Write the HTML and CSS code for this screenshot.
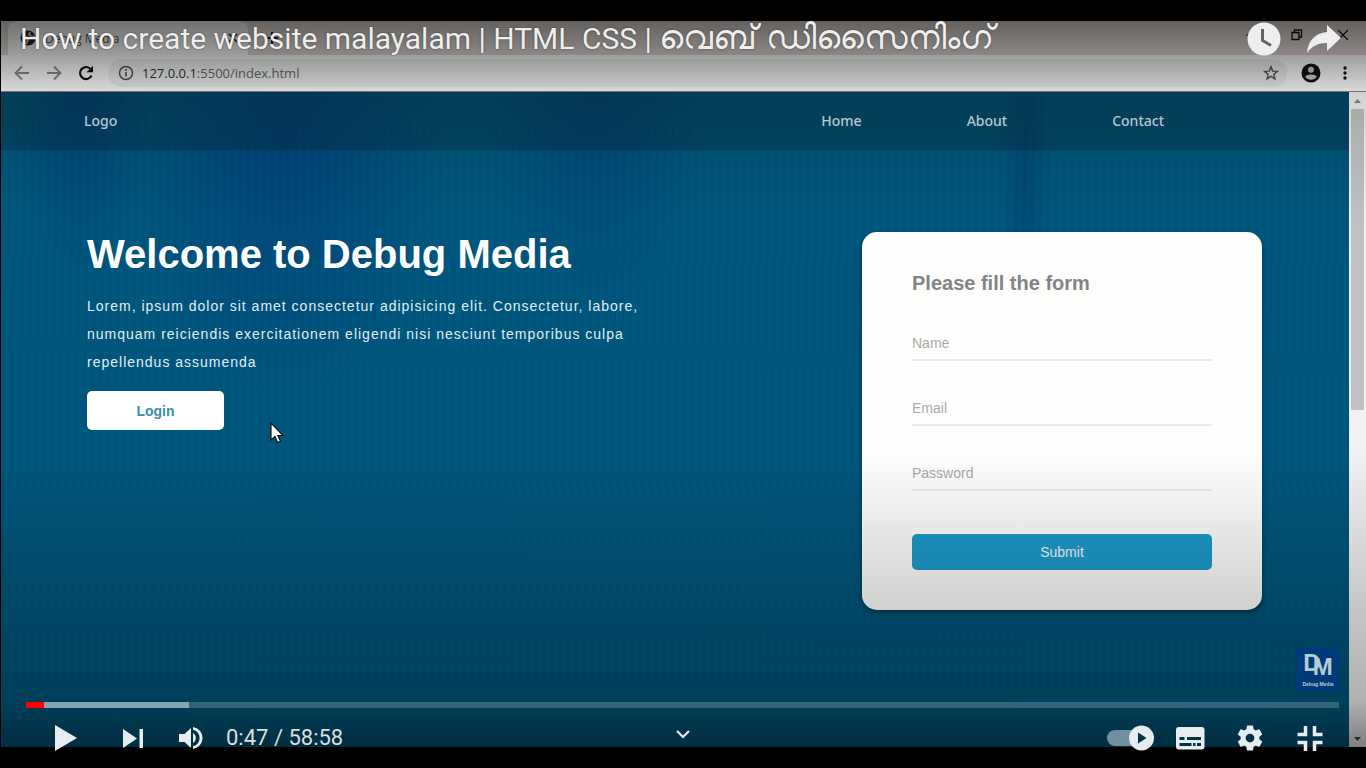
FILE: index.html
```html
<!DOCTYPE html>
<html lang="en">
<head>
<meta charset="utf-8">
<title>How to create website malayalam</title>
<link rel="stylesheet" href="styles.css">
</head>
<body>
<div class="player">
  <div class="browser">
    <div class="tabstrip">
      <div class="tab">
        <svg class="favicon" viewBox="0 0 16 16"><circle cx="8" cy="8" r="7.500" fill="#222"/><path d="M2 6l5 1 1 3-2 4M10 2l-1 3 4 2 2-1" fill="none" stroke="#bbb" stroke-width="2"/></svg>
        <span class="tab-name">Debug Media</span>
        <button class="tab-close" aria-label="Close tab"><svg width="10" height="10" viewBox="0 0 10 10"><path d="M1 1l8 8M9 1l-8 8" stroke="#222" stroke-width="1.500"/></svg></button>
      </div>
      <button class="new-tab" aria-label="New tab"><svg width="12" height="12" viewBox="0 0 12 12"><path d="M6 0v12M0 6h12" stroke="#222" stroke-width="2"/></svg></button>
      <div class="window-buttons">
        <button aria-label="Minimize"><svg width="12" height="12" viewBox="0 0 12 12"><path d="M1 6h10" stroke="#222"/></svg></button>
        <button aria-label="Restore"><svg width="12" height="12" viewBox="0 0 12 12"><path d="M1 3.500h7v7h-7zM3.500 3.500v-2.500h7v7h-2.500" fill="none" stroke="#111" stroke-width="1.300"/></svg></button>
        <button aria-label="Close"><svg width="12" height="12" viewBox="0 0 12 12"><path d="M1 1l10 10M11 1L1 11" stroke="#111" stroke-width="1.200"/></svg></button>
      </div>
    </div>
    <div class="toolbar">
      <button class="tool" aria-label="Back"><svg width="16" height="16" viewBox="0 0 16 16"><path d="M15 8H2M8 1.500L1.500 8 8 14.500" fill="none" stroke="#8a8a8a" stroke-width="1.800"/></svg></button>
      <button class="tool" aria-label="Forward"><svg width="16" height="16" viewBox="0 0 16 16"><path d="M1 8h13M8 1.500L14.500 8 8 14.500" fill="none" stroke="#8a8a8a" stroke-width="1.800"/></svg></button>
      <button class="tool" aria-label="Reload"><svg width="16" height="16" viewBox="0 0 16 16"><path d="M13.500 10.500A6 6 0 1 1 12 3.500L14 5.500" fill="none" stroke="#111" stroke-width="2.200"/><path d="M15 .8v6.400H8.600z" fill="#111"/></svg></button>
      <div class="address">
        <svg width="16" height="16" viewBox="0 0 16 16"><circle cx="8" cy="8" r="6.500" fill="none" stroke="#555" stroke-width="1.500"/><path d="M8 7v4.500M8 4v1.800" stroke="#555" stroke-width="1.700"/></svg>
        <span class="url"><b>127.0.0.1</b>:5500/index.html</span>
        <button class="star" aria-label="Bookmark"><svg width="16" height="16" viewBox="0 0 16 16"><path d="M8 1.800l1.700 4.300 4.700.3-3.600 3 1.200 4.500L8 11.400 4 13.900l1.200-4.500-3.600-3 4.700-.3z" fill="none" stroke="#555" stroke-width="1.400"/></svg></button>
      </div>
      <button class="tool" aria-label="Profile"><svg width="20" height="20" viewBox="0 0 20 20"><circle cx="10" cy="10" r="9.500" fill="#111"/><circle cx="10" cy="6.700" r="3" fill="#ccc"/><path d="M4.200 13.700c1.300-3 10.300-3 11.600 0-2.500 4-9.100 4-11.600 0z" fill="#ccc"/></svg></button>
      <button class="tool" aria-label="Menu"><svg width="16" height="16" viewBox="0 0 16 16"><g fill="#111"><circle cx="8" cy="3" r="1.700"/><circle cx="8" cy="8" r="1.700"/><circle cx="8" cy="13" r="1.700"/></g></svg></button>
    </div>
    <div class="viewport">
      <div class="page">
        <nav class="nav">
          <a class="brand" href="#">Logo</a>
          <a href="#">Home</a>
          <a href="#">About</a>
          <a href="#">Contact</a>
        </nav>
        <main class="hero">
          <section class="intro">
            <h1>Welcome to Debug Media</h1>
            <p>Lorem, ipsum dolor sit amet consectetur adipisicing elit. Consectetur, labore, numquam reiciendis exercitationem eligendi nisi nesciunt temporibus culpa repellendus assumenda</p>
            <button class="login">Login</button>
          </section>
          <form class="card">
            <h2>Please fill the form</h2>
            <input type="text" placeholder="Name" aria-label="Name">
            <input type="email" placeholder="Email" aria-label="Email">
            <input type="password" placeholder="Password" aria-label="Password">
            <button type="button" class="submit">Submit</button>
          </form>
        </main>
      </div>
      <div class="scrollbar">
        <svg width="17" height="17" viewBox="0 0 17 17"><path d="M5 11h7L8.500 7z" fill="#888"/></svg>
        <div class="thumb"></div>
        <svg class="down" width="17" height="17" viewBox="0 0 17 17"><path d="M5 7h7l-3.500 4z" fill="#444"/></svg>
      </div>
    </div>
    <div class="shade"></div>
  </div>

  <svg class="cursor" width="14" height="22" viewBox="0 0 14 22"><path d="M1 1v17l4-3.500 2.500 6 3-1.300-2.600-5.700H13z" fill="#fff" stroke="#111" stroke-width="1.200"/></svg>
  <div class="watermark"><span class="letters">D<span class="letter-m">M</span></span><span class="mark-name">Debug Media</span></div>

  <div class="overlay">
    <header class="top">
      <div class="title">How to create website malayalam | HTML CSS | <span class="ml" lang="ml">വെബ് ഡിസൈനിംഗ്</span></div>
      <button aria-label="Watch later"><svg width="36" height="36" viewBox="0 0 36 36"><circle cx="18" cy="18" r="16.500" fill="#eee"/><path d="M16.500 8v11.500l8.500 5" fill="none" stroke="#666360" stroke-width="3"/></svg></button>
      <button aria-label="Share"><svg width="36" height="36" viewBox="0 0 36 36"><path d="M21 4l14 13-14 13v-8C12 22 6 25 1 32 2 20 9 12 21 11z" fill="#eee"/></svg></button>
    </header>
    <footer class="bottom">
      <div class="seek"><div class="buffered"></div><div class="played"></div></div>
      <div class="controls">
        <div class="group left">
          <button class="wide" aria-label="Play"><svg width="36" height="36" viewBox="0 0 36 36"><path d="M7 5v26l22-13z" fill="#e6ecef"/></svg></button>
          <button class="wide" aria-label="Next"><svg width="36" height="36" viewBox="0 0 36 36"><path d="M8 9v19l14-9.500zM24.500 9h3.500v19h-3.500z" fill="#e6ecef"/></svg></button>
          <button class="slim" aria-label="Mute"><svg width="36" height="36" viewBox="0 0 36 36"><path d="M6 14v8h5.500l6.500 6V8l-6.500 6zM20 13v10c3.800-2 3.800-8 0-10zM20 7v2.700c8.800 2 8.800 14.600 0 16.600V29c12.800-2.500 12.800-19.500 0-22z" fill="#e6ecef"/></svg></button>
          <span class="time">0:47 / 58:58</span>
        </div>
        <button class="more" aria-label="More videos"><svg width="16" height="12" viewBox="0 0 16 12"><path d="M2 2l6 6 6-6" fill="none" stroke="#e6ecef" stroke-width="2.200"/></svg></button>
        <div class="group right">
          <button aria-label="Autoplay"><svg width="48" height="36" viewBox="0 0 48 36"><rect x="1" y="10" width="40" height="16" rx="8" fill="#70909d"/><circle cx="35.500" cy="18" r="12.500" fill="#e6ecef"/><path d="M32 12.500v11l8.500-5.500z" fill="#003345"/></svg></button>
          <button aria-label="Subtitles"><svg width="36" height="36" viewBox="0 0 36 36"><rect x="4" y="7" width="28.500" height="22.500" rx="3" fill="#e6ecef"/><path d="M7.500 17h5v3h-5zM15 17h14v3h-14zM7.500 23h12v3h-12zM21 23h2.500v3h-2.500zM25 23h4v3h-4z" fill="#003345"/></svg></button>
          <button aria-label="Settings"><svg width="30" height="30" viewBox="0 0 24 24"><path fill="#e6ecef" fill-rule="evenodd" d="M19.430 12.980a7.800 7.800 0 0 0 0-1.960l2.110-1.650a.5.500 0 0 0 .12-.64l-2-3.460a.5.500 0 0 0-.61-.22l-2.490 1a7.300 7.300 0 0 0-1.690-.98l-.38-2.650A.5.500 0 0 0 14 2h-4a.5.500 0 0 0-.49.420l-.38 2.650c-.61.250-1.170.590-1.690.980l-2.490-1a.5.500 0 0 0-.61.220l-2 3.460a.5.500 0 0 0 .12.640l2.110 1.650a7.800 7.800 0 0 0 0 1.960l-2.110 1.650a.5.500 0 0 0-.12.640l2 3.460c.12.220.39.300.61.220l2.490-1c.52.400 1.080.730 1.690.980l.38 2.650c.03.240.24.420.49.420h4c.25 0 .46-.18.490-.42l.38-2.650c.61-.25 1.170-.59 1.690-.98l2.490 1c.23.090.49 0 .61-.22l2-3.460a.5.500 0 0 0-.12-.64zM12 15.500a3.500 3.500 0 1 1 0-7 3.500 3.500 0 0 1 0 7z"/></svg></button>
          <button aria-label="Exit full screen"><svg width="36" height="36" viewBox="0 0 36 36"><path d="M13.500 6v8.500H5.500M22.500 6v8.500h8M13.500 31v-8.500H5.500M22.500 31v-8.500h8" fill="none" stroke="#e6ecef" stroke-width="3.500"/></svg></button>
        </div>
      </div>
    </footer>
  </div>
</div>
</body>
</html>
```
FILE: styles.css
```css
* { box-sizing: border-box; }
body { margin: 0; background: #000; font-family: "Liberation Sans", Arial, sans-serif; }
h1, h2, p { margin: 0; }
button { border: 0; padding: 0; background: none; color: inherit; font: inherit; display: flex; align-items: center; justify-content: center; }
a { color: inherit; text-decoration: none; }
svg { display: block; flex: none; }

.player { position: relative; min-height: 100vh; display: flex; flex-direction: column; padding: 21px 0 21px 1px; background: #000; }
.browser { position: relative; flex: 1; display: flex; flex-direction: column; }
.shade { position: absolute; inset: 0; pointer-events: none; background: linear-gradient(rgba(0,0,0,.55), rgba(0,0,0,.37) 34px, rgba(0,0,0,.13) 71px, rgba(0,0,0,0) 200px, rgba(0,0,0,0) 430px, rgba(0,0,0,.18) 588px, rgba(0,0,0,.27) 680px, rgba(0,0,0,.48)); }

.tabstrip { height: 34px; display: flex; align-items: center; background: #ded6d1; }
.tab { width: 240px; height: 34px; margin-left: 7px; padding: 0 10px 0 12px; display: flex; align-items: center; gap: 9px; border-radius: 8px 8px 0 0; background: #f6f6f5; }
.favicon { width: 16px; height: 16px; }
.tab-name { flex: 1; font: 12px "Open Sans", sans-serif; color: #555; }
.new-tab { margin-left: 18px; }
.window-buttons { margin-left: auto; display: flex; gap: 34px; padding: 0 17px 6px 0; }

.toolbar { height: 37px; display: flex; align-items: center; padding: 0 13px; gap: 16px; background: #fafafa; border-bottom: 1px solid #888; }
.address { flex: 1; height: 28px; display: flex; align-items: center; gap: 8px; padding: 0 8px 0 10px; margin: 0 -2px; border-radius: 14px; background: #eaeeeb; }
.url { flex: 1; font: 13px "Open Sans", sans-serif; color: #666; }
.url b { font-weight: 400; color: #333; }

.viewport { flex: 1; display: flex; }
.page { flex: 1; background:
  repeating-linear-gradient(91deg, rgba(0,20,50,.03) 0 2px, rgba(0,140,160,.03) 3px 5px, transparent 6px 8px),
  radial-gradient(160px 260px at 21% 8%, rgba(0,40,120,.4), transparent),
  radial-gradient(110px 240px at 44% 0, rgba(0,40,110,.3), transparent),
  radial-gradient(70px 200px at 6% 0, rgba(0,30,110,.3), transparent),
  radial-gradient(24px 180px at 76% 12%, rgba(0,30,90,.25), transparent),
  #00567c; }
.nav { height: 58px; display: flex; align-items: center; gap: 105px; padding: 0 185px 2px 83px; background: rgba(10,35,45,.3); color: #ccdce3; font: 500 14px "Noto Sans", sans-serif; }
.brand { margin-right: auto; }
.hero { display: flex; justify-content: space-between; align-items: flex-start; padding: 82px 87px 40px 86px; }
.intro { flex: 0 1 570px; display: flex; flex-direction: column; align-items: flex-start; color: #fff; }
h1 { font-size: 40px; line-height: 44px; }
.intro p { margin-top: 16px; font-size: 14px; line-height: 28px; letter-spacing: 1px; color: #e2eef3; }
.login { margin-top: 15px; width: 137px; height: 39px; border-radius: 5px; background: #fff; color: #3b8db3; font-size: 14px; font-weight: 700; }
.card { width: 400px; padding: 38px 50px 40px; border-radius: 15px; background: #fefefd; display: flex; flex-direction: column; box-shadow: 0 3px 6px rgba(0,0,0,.35); }
h2 { font-size: 20px; line-height: 26px; margin-bottom: 30px; color: #828486; }
.card input { width: 100%; height: 35px; margin-bottom: 30px; padding: 0; border: 0; border-bottom: 2px solid #eaeaea; background: none; font: 14px "Liberation Sans", Arial, sans-serif; }
.card input::placeholder { color: #a8aaa8; opacity: 1; }
.submit { height: 36px; margin-top: 13px; border-radius: 5px; background: #1d9bcb; color: #f2fcff; font-size: 14px; }
.scrollbar { width: 17px; display: flex; flex-direction: column; background: #f1f1f1; }
.thumb { height: 301px; margin: 0 2px; background: #c1c1c1; }
.down { margin-top: auto; }

.cursor { position: absolute; left: 270px; top: 422px; }
.watermark { position: absolute; right: 26px; bottom: 77px; width: 44px; height: 44px; background: #003a78; color: #b5ccd5; display: flex; flex-direction: column; align-items: center; font-weight: 700; }
.letters { display: flex; font-size: 24px; line-height: 32px; }
.letter-m { margin: 4px 0 0 -8px; }
.mark-name { margin-top: -2px; font-size: 5px; line-height: 6px; }

.overlay { position: absolute; inset: 0; display: flex; flex-direction: column; justify-content: space-between; font-family: Roboto, sans-serif; }
.top { display: flex; align-items: center; gap: 24px; padding: 19px 24px 0 20px; }
.title { flex: 1; font-size: 30px; line-height: 40px; color: #eee; text-shadow: 0 0 2px rgba(0,0,0,.5); white-space: nowrap; }
.ml { font-size: 34px; line-height: 36px; }
.seek { position: relative; height: 6px; margin: 0 27px 0 26px; background: rgba(255,255,255,.2); }
.buffered, .played { position: absolute; inset: 0 auto 0 0; }
.buffered { width: 163px; background: rgba(255,255,255,.42); }
.played { width: 18px; background: #f00; }
.controls { height: 60px; display: grid; grid-template-columns: 1fr auto 1fr; align-items: center; padding: 0 26px; }
.group { display: flex; align-items: center; }
.left { padding-left: 6px; }
.right { justify-content: flex-end; }
.right button { width: 60px; }
.wide { width: 67px; }
.slim { width: 50px; }
.time { margin-left: 10px; font-size: 22px; line-height: 28px; color: #ddd; }
.more { width: 40px; height: 36px; padding-bottom: 6px; }
```
